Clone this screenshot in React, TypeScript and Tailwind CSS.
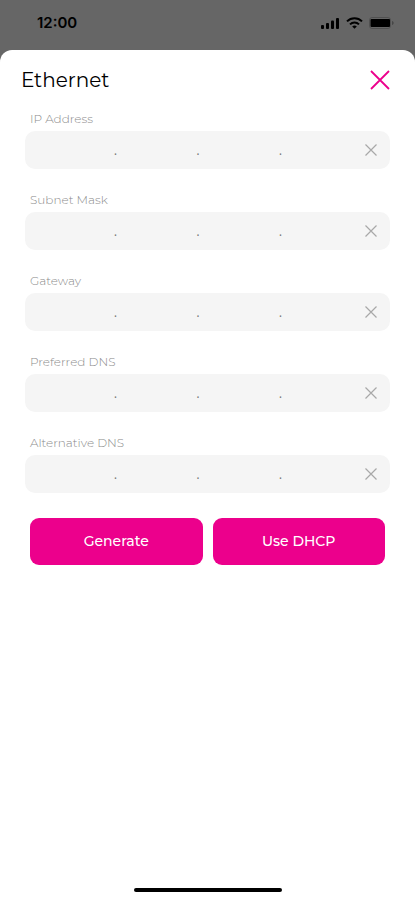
import React, { useState } from 'react';

const FIELDS = [
    { id: 'ip', label: 'IP Address' },
    { id: 'subnet', label: 'Subnet Mask' },
    { id: 'gateway', label: 'Gateway' },
    { id: 'preferredDns', label: 'Preferred DNS' },
    { id: 'alternativeDns', label: 'Alternative DNS' },
];

const EMPTY = ['', '', '', ''];

interface AddressFieldProps {
    id: string;
    label: string;
    value: string[];
    onChange: (value: string[]) => void;
}

const StatusBar: React.FC = () => (
    <div className="flex h-[50px] items-center justify-between pr-[21px] pb-1 pl-[37px] text-black">
        <span className="font-['Inter',sans-serif] text-[15px] font-semibold">12:00</span>
        <div className="flex items-center gap-[6px]">
            <svg width="20" height="12" viewBox="0 0 20 12" fill="currentColor">
                <rect x="1" y="8" width="3" height="4" rx="1" />
                <rect x="6" y="6" width="3" height="6" rx="1" />
                <rect x="11" y="3.5" width="3" height="8.5" rx="1" />
                <rect x="16" y="1" width="3" height="11" rx="1" />
            </svg>
            <svg width="17" height="12" viewBox="0 0 17 12" fill="none" stroke="currentColor" strokeWidth="2">
                <path d="M1 4.4C5.2 0.2 11.8 0.2 16 4.4" />
                <path d="M4 7.4C6.5 5 10.5 5 13 7.4" />
                <path d="M6.2 9.4C7.5 8.2 9.5 8.2 10.8 9.4L8.5 11.8Z" fill="currentColor" stroke="none" />
            </svg>
            <svg width="25" height="12" viewBox="0 0 25 12">
                <rect x="0.5" y="0.5" width="21" height="11" rx="2.5" fill="none" stroke="#000" strokeOpacity="0.2" />
                <rect x="1.5" y="2" width="19.5" height="8" rx="1" fill="#000" />
                <path d="M23 4v4c1-.4 1.7-1.1 1.7-2S24 4.400 23 4Z" fill="#000" fillOpacity="0.3" />
            </svg>
        </div>
    </div>
);

const AddressField: React.FC<AddressFieldProps> = ({ id, label, value, onChange }) => {
    const handleOctetChange = (index: number, octet: string) => {
        onChange(value.map((item, i) => (i === index ? octet : item)));
    };

    return (
        <div>
            <label htmlFor={`${id}-0`} className="block pl-[5px] text-[12px] leading-[18px] font-light text-[#8c8c8c]">
                {label}
            </label>
            <div className="mt-[3px] flex h-[38px] items-center rounded-[10px] bg-[#f5f5f5] pr-[9px] pl-[10px] text-[14px] text-[#777777]">
                {value.map((octet, index) => (
                    <React.Fragment key={index}>
                        {index > 0 && <span className="w-1 text-center">.</span>}
                        <input
                            id={`${id}-${index}`}
                            type="text"
                            inputMode="numeric"
                            maxLength={3}
                            aria-label={index > 0 ? `${label} part ${index + 1}` : undefined}
                            className="h-full min-w-0 flex-1 bg-transparent text-center outline-none"
                            value={octet}
                            onChange={(e) => handleOctetChange(index, e.target.value)}
                        />
                    </React.Fragment>
                ))}
                <button
                    type="button"
                    aria-label={`Clear ${label}`}
                    className="flex h-5 w-5 items-center justify-center"
                    onClick={() => onChange(EMPTY)}
                >
                    <svg width="12" height="12" viewBox="0 0 12 12" stroke="#a8a8a8" strokeWidth="1.2">
                        <path d="M0.500 0.500L11.500 11.500M11.500 0.500L0.500 11.500" />
                    </svg>
                </button>
            </div>
        </div>
    );
};

const App: React.FC = () => {
    const [values, setValues] = useState<Record<string, string[]>>({});

    return (
        <div className="flex min-h-screen flex-col bg-[#666666] font-['Montserrat','Inter',sans-serif]">
            <StatusBar />
            <main className="flex flex-1 flex-col rounded-t-[12px] bg-white">
                <div className="flex items-center justify-between pt-[14px] pr-[25px] pl-[21px]">
                    <h1 className="text-[20px] leading-8 text-black">Ethernet</h1>
                    <button type="button" aria-label="Close" className="flex h-5 w-5 items-center justify-center">
                        <svg width="20" height="20" viewBox="0 0 20 20" stroke="#ec008c" strokeWidth="1.8">
                            <path d="M1 1L19 19M19 1L1 19" />
                        </svg>
                    </button>
                </div>
                <form className="px-[25px] pt-[14px]" onSubmit={(e) => e.preventDefault()}>
                    <div className="flex flex-col gap-[22px]">
                        {FIELDS.map(({ id, label }) => (
                            <AddressField
                                key={id}
                                id={id}
                                label={label}
                                value={values[id] ?? EMPTY}
                                onChange={(value) => setValues({ ...values, [id]: value })}
                            />
                        ))}
                    </div>
                    <div className="mt-[25px] grid grid-cols-2 gap-[10px] px-[5px] text-[14px] font-medium text-white">
                        <button type="submit" className="h-[47px] rounded-[9px] bg-[#ec008c]">
                            Generate
                        </button>
                        <button type="button" className="h-[47px] rounded-[9px] bg-[#ec008c]">
                            Use DHCP
                        </button>
                    </div>
                </form>
                <div className="mx-auto mt-auto mb-2 h-1 w-[148px] rounded-full bg-black" />
            </main>
        </div>
    );
};

export default App;
